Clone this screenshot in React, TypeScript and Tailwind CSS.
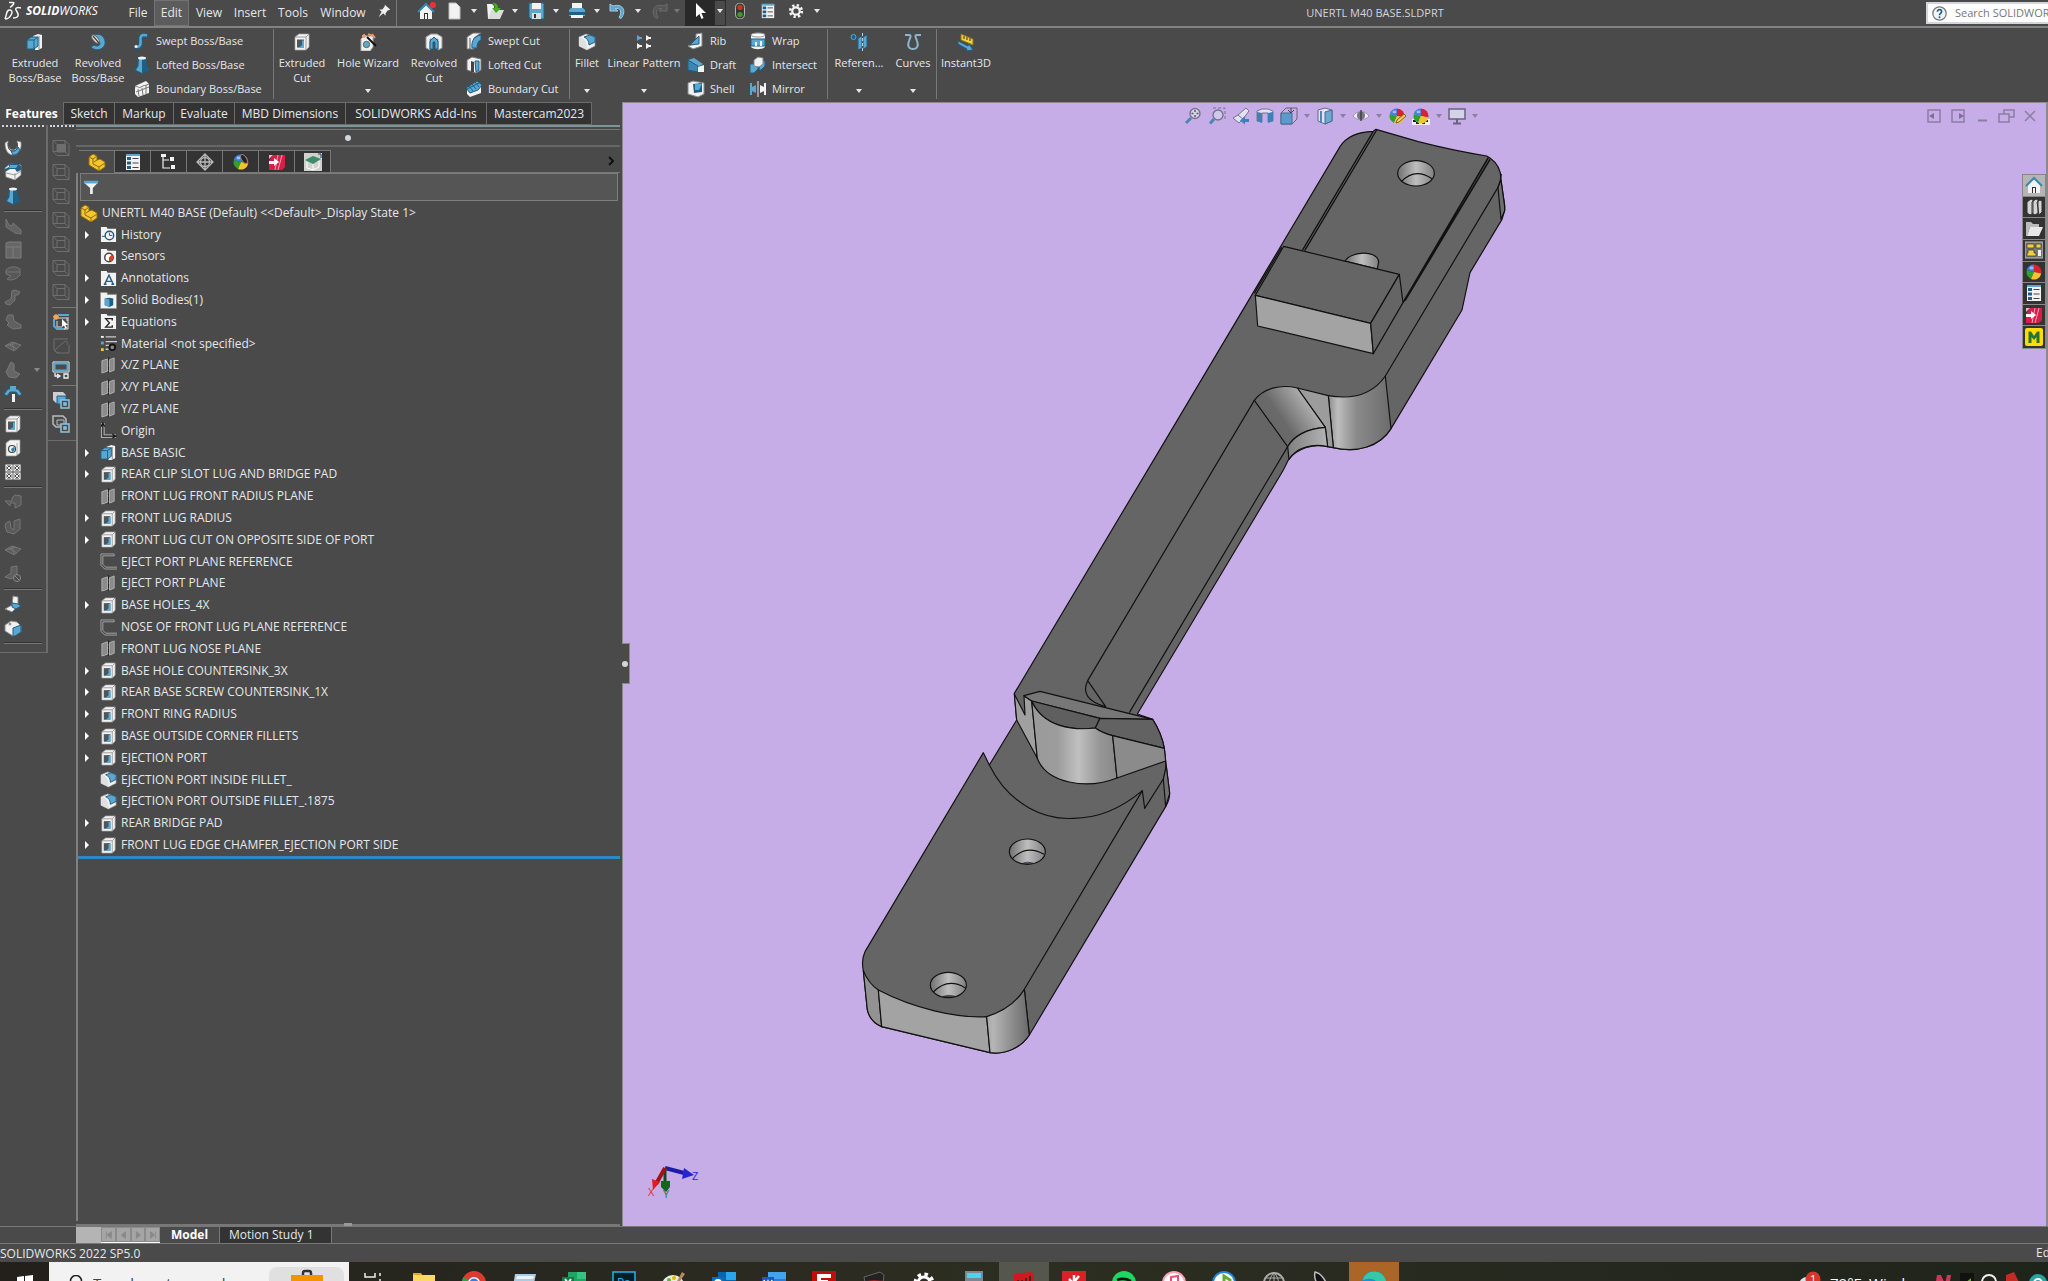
import React from 'react';

type GlyphMap = Record<string, React.ReactNode>;

const W = '#f2f2f2';
const B = '#5ba7cf';
const D = '#1f5f86';
const G = '#6e6e6e';

const ball = (
  <>
    <path d="M9 9V1.5A7.5 7.5 0 0 0 1.8 7Z" fill="#3f7ee0" />
    <path d="M9 9 1.8 7A7.5 7.5 0 0 0 6 15.9Z" fill="#2ea12e" />
    <path d="M9 9V1.5A7.5 7.5 0 0 1 16.3 10.5Z" fill="#d8232a" />
    <path d="M9 9 6 15.9A7.5 7.5 0 0 0 16.3 10.5Z" fill="#f4c430" />
    <ellipse cx="6.5" cy="5" rx="2" ry="1.4" fill="#fff" opacity=".5" />
  </>
);

const cube = (
  <>
    <path d="M1 1.5h12l4 4v11H5l-4-4Z" fill="none" stroke={G} />
    <path d="M5 5.500h8v7H5ZM1 1.500l4 4M1 12.500h4M13 1.500v4M13 12.500l4 4" fill="none" stroke={G} />
  </>
);

const folder = <path d="M1 1h6l1 2h9v14H1Z" fill={W} />;

const glyphs: GlyphMap = {
  extrude: (
    <>
      <path d="M7 3 12 1l4 1v13l-4 2H9Z" fill={W} />
      <path d="M13 3v13" stroke="#888" />
      <path d="M1 7l4-3h7v9l-4 3H1Z" fill={B} stroke={D} />
      <path d="M1 7h7v9M8 7l4-3" fill="none" stroke={D} />
    </>
  ),
  revolve: (
    <>
      <path d="M5 2C12-1 17 5 16 11 14 18 5 18 2 14l3-2c3 2 6 1 6-2Z" fill={B} stroke={D} />
      <ellipse cx="6.500" cy="6" rx="2.500" ry="5" transform="rotate(-40 6.500 6)" fill="#e4e4e4" stroke="#6b6b6b" />
      <path d="M4 3l6 7" stroke="#444" strokeWidth="1.300" />
    </>
  ),
  sweep: (
    <>
      <path d="M3 15c4 1 5-2 4.500-6S8 1.500 15 4" fill="none" stroke={D} strokeWidth="4.500" />
      <path d="M3 14.500c4 1 5-2 4.500-6S8 2 14 3.500" fill="none" stroke={B} strokeWidth="2.500" />
      <circle cx="3" cy="14.500" r="1.500" fill={W} />
    </>
  ),
  loft: (
    <>
      <path d="M5 2h8l1 8 3 4-8 4-8-4 3-4Z" fill={D} />
      <path d="M6 3h3v14l-6-3 2.500-4Z" fill={B} />
      <ellipse cx="9" cy="2" rx="4" ry="1.500" fill={W} />
    </>
  ),
  boundary: (
    <>
      <path d="M2 6 13 1l3 3v9L5 17l-3-3Z" fill={W} />
      <path d="M2 7c3-2 3 2 6 0s4-1 8-3M5 9l1 7M9 8l1 7M13 5v9M3 12l13-5" fill="none" stroke="#777" />
    </>
  ),
  cut: (
    <>
      <path d="M2 4l4-3h10v13l-3 3H2Z" fill={W} stroke="#aaa" strokeWidth=".7" />
      <path d="M13 4v13M2 4h11l3-3" fill="none" stroke="#888" strokeWidth=".8" />
      <path d="M4 6.500h7v8H4Z" fill="#555" />
      <path d="M5.500 7.500H11v7H5.500l3-2v-5Z" fill={B} />
      <path d="M5 14l3.500-2V7" fill="none" stroke={D} />
    </>
  ),
  wizard: (
    <>
      <path d="M2 6l3-3h9v11l-3 4H2Z" fill={W} stroke="#aaa" />
      <circle cx="7.500" cy="11.500" r="3.200" fill={B} stroke="#666" />
      <path d="M8 4l9 9" stroke="#111" strokeWidth="2" />
      <path d="M3 3h4M5 1v4M9 1l5 2M13 1l3 4" stroke="#eb9b62" strokeWidth="1.800" />
    </>
  ),
  revcut: (
    <>
      <path d="M1 4l5-3h6l5 3v11l-4 2V6H5v11l-4-2Z" fill={W} stroke="#999" />
      <path d="M5 8l4-4 4 4v8h-3V9H8v7H5Z" fill={B} stroke={D} />
    </>
  ),
  sweepcut: (
    <>
      <path d="M2 5 8 1h8L9 6v11H2Z" fill={W} stroke="#777" />
      <path d="M7 16C6 8 10 4 16 3v5c-3 1-4 4-4 8Z" fill={B} stroke={D} />
      <path d="M5 6v11" stroke="#555" />
    </>
  ),
  loftcut: (
    <>
      <path d="M2 4l5-3 9 2v11l-5 3-9-3Z" fill={W} stroke="#777" />
      <path d="M6 5l3 1v10H6Z" fill="#444" />
      <path d="M10 5h4v9l-3 2Z" fill={B} stroke={D} />
    </>
  ),
  boundcut: (
    <>
      <path d="M2 8 13 2l3 3v8L5 17l-3-3Z" fill={W} />
      <path d="M1 8 12 1l5 4-4 5-8 3Z" fill={B} stroke={D} />
      <path d="M4 6l4 5M7 4l4 5M10 2l4 5M2 9l12-6" stroke={D} />
    </>
  ),
  fillet: (
    <>
      <path d="M1 4 8 1l9 3v9l-8 4-8-4Z" fill={W} stroke="#999" strokeWidth=".7" />
      <path d="M1 4c6 1 8 5 8 13l-8-4Z" fill="#e0e0e0" />
      <path d="M6 4l6-2 5 2v5l-6 3C11 8 9 5 6 4Z" fill={B} stroke={D} />
    </>
  ),
  pattern: (
    <>
      <path d="M2 2v6l3-2h2V4H5Z" fill={B} />
      <path d="M11 2v6l3-2h2V4h-2ZM2 10v6l3-2h2v-2H5ZM11 10v6l3-2h2v-2h-2Z" fill={W} />
    </>
  ),
  rib: (
    <>
      <path d="M9 2l6-1v13l-9 3-5-3 8-3Z" fill={W} stroke="#888" />
      <path d="M3 13 12 4v8Z" fill={B} stroke={D} />
    </>
  ),
  draft: (
    <>
      <path d="M1 4l6-2 9 6-5 3Z" fill={B} />
      <path d="M1 4l10 6v6l-10-2Z" fill="#3b87b3" stroke={D} />
      <path d="M11 11l6-2v7h-6Z" fill={W} />
    </>
  ),
  shell: (
    <>
      <path d="M1 3 6 1l11 2v11l-6 3-10-3Z" fill={W} stroke="#888" />
      <path d="M6 4l9-1v9l-8 1Z" fill={D} />
      <path d="M8 4h7l-3 6H8Z" fill={B} />
    </>
  ),
  wrap: (
    <>
      <path d="M2 3v12c3 3 11 3 14 0V3Z" fill={W} />
      <ellipse cx="9" cy="3" rx="7" ry="2" fill="#fff" stroke="#999" />
      <path d="M2 7h14v7H2Z" fill={B} stroke={D} />
      <path d="M6 10h2v4H6ZM11 9h2v5h-2Z" fill={W} />
    </>
  ),
  intersect: (
    <>
      <path d="M1 8h8v5l-4 4H1Z" fill={B} stroke={D} />
      <path d="M11 5h5v5l-4 4h-2Z" fill={B} stroke={D} />
      <path d="M5 4l4-3 5 1v6l-4 3-5-1Z" fill={W} stroke="#888" />
    </>
  ),
  mirror: (
    <>
      <path d="M1 3h2v4l4-2v8l-4-2v4H1Z" fill={B} />
      <path d="M17 3h-2v4l-4-2v8l4-2v4h2Z" fill={W} />
      <path d="M9 1v16" stroke="#999" strokeWidth="2" />
    </>
  ),
  reference: (
    <>
      <circle cx="3.500" cy="4" r="2.500" fill={D} stroke={B} />
      <path d="M8 5l4-2v12l-4 2ZM13 4l4-2v12l-4 2Z" fill={B} stroke={D} />
      <path d="M12.500 0v18" stroke="#ccc" strokeDasharray="3 2" />
    </>
  ),
  curves: <path d="M1 2h4c3 0 1 3 0 6-2 5 0 8 4 8s6-3 4-8c-1-3-3-6 0-6h4" fill="none" stroke="#8cb4cc" strokeWidth="2" />,
  instant: (
    <>
      <path d="M4 1l12 5v6L4 7Z" fill="#f3cf3c" stroke="#8a7320" />
      <path d="M7 3v3M10 4v3M13 5v3" stroke="#333" />
      <path d="M1 8l10 5 1-2 4 6-7 1 1-2-9-5Z" fill={B} stroke={D} />
    </>
  ),
  home: (
    <>
      <path d="M3 9 9 3l6 6v8H3Z" fill={W} />
      <path d="M1 10 9 2l8 8" fill="none" stroke="#3b87b3" strokeWidth="2" />
      <path d="M7 11h4v6H7Z" fill="#333" />
      <path d="M8 12h2v5H8Z" fill={W} />
    </>
  ),
  page: <path d="M4 1h7l4 4v12H4Z" fill={W} stroke="#bbb" />,
  open: (
    <>
      <path d="M1 2h5l2 2v12l-6 1Z" fill={W} />
      <path d="M5 8h13l-4 9H2Z" fill="#dcdcdc" />
      <path d="M6 1c5 0 6 2 6 5h3l-5 5-4-5h3c0-2-1-4-3-5Z" fill="#3fae1f" />
    </>
  ),
  save: (
    <>
      <path d="M2 1h15v16H4l-2-2Z" fill={B} stroke={D} />
      <path d="M5 1h9v6H5Z" fill={W} />
      <path d="M5 11h9v6H5Z" fill="#ddd" />
      <path d="M7 12h2v4H7Z" fill="#333" />
    </>
  ),
  print: (
    <>
      <path d="M4 1h10v6H4Z" fill={W} />
      <path d="M1 8l2-2h12l2 2v6H1Z" fill={B} />
      <path d="M1 10h16v3H1Z" fill={D} />
      <path d="M3 13h12v3H3Z" fill={W} />
    </>
  ),
  undo: <path d="M1 2v7h8L6 6.500c6-1 7 4 4 9l2 1C18 9 14 1 4 4Z" fill={B} stroke="#9fcbe2" />,
  redo: <path d="M17 2v7H9l3-2.500c-6-1-7 4-4 9l-2 1C0 9 4 1 14 4Z" fill="#555" stroke="#6c6c6c" />,
  cursor: <path d="M5 1v14l3.500-3 2 5 2-1-2-5H15Z" fill="#fff" />,
  traffic: (
    <>
      <rect x="4" y="0" width="10" height="18" rx="5" fill="#333" stroke="#ccc" />
      <circle cx="9" cy="5" r="3" fill="#d83020" />
      <circle cx="9" cy="13" r="3" fill="#3d9a28" />
    </>
  ),
  list: (
    <>
      <path d="M2 1h14v16H2Z" fill={W} />
      <path d="M3 4h4v3H3ZM3 8.500h4v3H3ZM3 13h4v3H3Z" fill={D} />
      <path d="M8.500 5.500h6M8.500 10h6M8.500 14.500h6" stroke="#444" />
      <path d="M2 1h14v2H2Z" fill={B} />
    </>
  ),
  gear: (
    <>
      <circle cx="9" cy="9" r="6.500" fill="none" stroke={W} strokeWidth="3" strokeDasharray="2.600 2.500" />
      <circle cx="9" cy="9" r="4.200" fill="none" stroke={W} strokeWidth="2.500" />
    </>
  ),
  pin: <path d="M10 1l7 6-2 1-1 0-3 4 0 3-3-3-6 5 4-7-3-3h4l3-4Z" fill={W} />,
  part: (
    <>
      <path d="M1 4l4-3 4 2v4l3-1 5 3v5l-6 4-10-6Z" fill="#f5c62f" stroke="#8d6a10" />
      <path d="M1 4l4 2v5l6 3 6-4M11 14v4M5 6l4-3M9 7l-3 2" fill="none" stroke="#8d6a10" />
    </>
  ),
  tree: (
    <>
      <path d="M3 1v14h7M3 7h6" fill="none" stroke={W} strokeWidth="1.200" />
      <path d="M1 1h5v3H1ZM10 4h4v4h-4ZM11 12h4v4h-4Z" fill={W} />
    </>
  ),
  target: (
    <>
      <path d="M9 1l8 8-8 8-8-8ZM9 1v16M1 9h16" fill="none" stroke="#b9b9b9" strokeWidth="1.300" />
      <circle cx="9" cy="9" r="4.500" fill="none" stroke="#b9b9b9" strokeWidth="1.300" />
    </>
  ),
  ball,
  tabball: (
    <>
      {ball}
      <ellipse cx="12" cy="6" rx="2.500" ry="5" transform="rotate(-30 12 6)" fill="#222" stroke="#888" />
    </>
  ),
  cam: (
    <>
      <path d="M5 2h12v12l-3 3H1V8Z" fill="#d81e48" />
      <path d="M10 2 7 17M14 2l-4 15" stroke="#f7c6d1" strokeWidth=".8" />
      <path d="M1 8h5V5l5 4-5 4v-2H1Z" fill="#fff" />
      <path d="M1 2h4L1 6Z" fill="#f3b4c2" />
    </>
  ),
  sheet: (
    <>
      <path d="M0 0h18v18H0Z" fill="#cfd2cf" />
      <path d="M1 7l8-4 8 3-8 5Z" fill="#3f8a6c" />
      <path d="M3 9v6l6 2V11M9 17l6-3V8" fill="none" stroke="#fff" />
      <path d="M14 1h3v4" fill="none" stroke="#246" />
    </>
  ),
  history: (
    <>
      {folder}
      <circle cx="10" cy="10" r="4.500" fill="none" stroke={D} strokeWidth="1.500" />
      <path d="M10 7v3h3M2 11h4" fill="none" stroke={D} />
    </>
  ),
  sensors: (
    <>
      {folder}
      <circle cx="9.500" cy="10" r="4.500" fill="#fff" stroke="#444" strokeWidth="1.500" />
      <path d="M9.500 14V10l3-3a4 4 0 0 1-3 7Z" fill="#e04020" />
    </>
  ),
  annotations: (
    <>
      {folder}
      <path d="M5 15 9.500 5.500 14 15M7 12h5M4 15h3M12 15h3" fill="none" stroke={D} strokeWidth="1.500" />
    </>
  ),
  bodies: (
    <>
      {folder}
      <path d="M.5.500h7l1 2h9v15H.5Z" fill="none" stroke="#999" />
      <path d="M5 7l5-1 4 1v7l-4 2-5-2Z" fill={D} />
      <path d="M5 7l5 1v8l-5-2Z" fill={B} />
    </>
  ),
  equations: (
    <>
      {folder}
      <path d="M13 8V6H6l4 4.500L6 15h7v-2" fill="none" stroke="#222" strokeWidth="1.400" />
    </>
  ),
  material: (
    <>
      <path d="M1 1h3v2H1Z" fill={W} />
      <path d="M1 7h3v3H1Z" fill={B} />
      <path d="M1 14h3v3H1Z" fill="#f4c430" />
      <path d="M6 2h11M6 7h12M6 11h5M6 15h3" stroke="#ccc" strokeWidth="1.500" />
      <circle cx="13" cy="13" r="3" fill="#888" stroke="#151515" strokeWidth="2" />
    </>
  ),
  plane: (
    <>
      <path d="M2 4l6-2v13l-6 2ZM10 3l5-2v13l-5 2Z" fill="#8b8b8b" stroke="#b0b0b0" />
      <path d="M9 0v18" stroke="#222" strokeDasharray="5 1 2 1" />
    </>
  ),
  origin: (
    <>
      <path d="M3 1v14h14" fill="none" stroke="#a8a8a8" strokeWidth="4" />
      <path d="M3 2v13h13M1 5l2-4 2 4M13 13l4 2-4 2" fill="none" stroke="#161616" strokeWidth="1.200" />
    </>
  ),
  sketch: <path d="M15 1H1v12l4 4h13M15 3H3v9l3 3h12M15 1v2" fill="none" stroke="#a6a6a6" />,
  funnel: (
    <>
      <path d="M1 4h16l-6 6v7H8v-7Z" fill={W} />
      <path d="M1 2h16v3H1Z" fill={B} />
    </>
  ),
  curveband: (
    <>
      <path d="M1 4l3-2c0 5 1 9 5 9s5-4 4-9l4 1c1 8-3 13-8 13S1 11 1 4Z" fill={W} stroke="#888" strokeWidth=".7" />
      <path d="M4 4c0 5 1 8 5 8s5-3 4-8" fill="none" stroke="#333" />
      <path d="M7 12c4 1 6-1 7-4l2 3c-1 3-4 5-7 5Z" fill={B} stroke={D} />
    </>
  ),
  indent: (
    <>
      <path d="M1 5l5-4 11 1v10l-6 5-9-3Z" fill={W} stroke="#888" strokeWidth=".7" />
      <path d="M5 1h9l3 2v4l-4 2-2-3H6L1 9V6l4-2Z" fill={D} />
      <path d="M6 2h8l-2 3H5Z" fill={B} />
      <path d="M11 10v7M2 10l9 2 6-4" stroke="#999" fill="none" />
    </>
  ),
  arch: (
    <>
      <path d="M0 9l4-5h10l4 5-3 2-3-4H6l-3 4Z" fill={B} stroke={D} />
      <path d="M8 9h3v8H8Z" fill={W} />
      <path d="M6 1h6v4H6Z" fill={B} />
    </>
  ),
  hole: (
    <>
      <path d="M2 4l4-3h10v13l-4 3H2Z" fill={W} stroke="#999" strokeWidth=".7" />
      <circle cx="8" cy="10" r="3.500" fill={W} stroke="#444" strokeWidth="1.200" />
      <path d="M8 13a3 3 0 0 0 2-5L7 10Z" fill="#2f80b4" />
      <path d="M13 4v12" stroke="#aaa" />
    </>
  ),
  grid4: (
    <>
      <path d="M2 2h6v6H2ZM10 2h6v6h-6ZM2 10h6v6H2ZM10 10h6v6h-6Z" fill="none" stroke={W} strokeWidth="1.200" />
      <path d="M2 2l6 6M8 2 2 8M10 2l6 6M16 2l-6 6M2 10l6 6M8 10l-6 6M10 10l6 6M16 10l-6 6" stroke={W} />
    </>
  ),
  elbow: (
    <>
      <path d="M9 1l5 1v9l-6 6-7-3 7-4Z" fill={W} stroke="#888" />
      <path d="M8 8l6 1 3 2-5 3-4-2Z" fill={B} stroke={D} />
    </>
  ),
  block: (
    <>
      <path d="M1 6l6-4 6 1 4 4v6l-8 4-8-5Z" fill={W} stroke="#888" />
      <path d="M9 9l8-3v7l-6 4H9Z" fill={B} stroke={D} />
      <circle cx="6" cy="5" r="1.500" fill="#999" />
    </>
  ),
  ghostA: <path d="M2 2l3 6 3 1 1-3 8 7v4l-6-1-9-6Z" fill="#636363" stroke="#757575" />,
  ghostB: <path d="M2 2l3-1h12v16H2ZM2 6h15M9 6v11" fill="#666" stroke="#7c7c7c" />,
  ghostC: <path d="M2 5c4-4 10-4 14-1v6c-4 5-10 6-13 4l4-3-5-2ZM2 7h14" fill="#585858" stroke="#757575" />,
  ghostD: <path d="M8 2l3-1 5 2-2 3h-3v5l-5 5-4-1-1-2 6-3Z" fill="#606060" stroke="#777" />,
  ghostE: <path d="M4 2h5l1 6 7 4v3l-8 1-6-4 2-2-3-3Z" fill="#606060" stroke="#777" />,
  ghostF: <path d="M1 9l7-4 9 3-7 6ZM4 7l9 5M8 5l2 9M1 9l11-3" fill="#5c5c5c" stroke="#757575" />,
  ghostG: <path d="M7 1l3 2v7l6 3-4 4-7-1-3-5Z" fill="#666" stroke="#7a7a7a" />,
  ghostJ: <path d="M1 8l5 5v-3h5v5l6-3V3l-6-1-3 3v3H4Z" fill="#585858" stroke="#757575" />,
  ghostH: <path d="M2 6l4-2 1 7 3 2V4l6-2v10l-6 5-7-2-2-6Z" fill="#5a5a5a" stroke="#757575" />,
  ghostI: (
    <>
      <path d="M7 2l6-1v8l-6 5-6-2 6-4Z" fill="#5e5e5e" stroke="#777" />
      <circle cx="13" cy="13" r="3.500" fill="#4a4a4a" stroke="#888" />
      <path d="M11 11l4 4" stroke="#888" />
    </>
  ),
  cube,
  cubeFace: (
    <>
      {cube}
      <path d="M5 5.500h9v8H5Z" fill={G} />
    </>
  ),
  selectSketch: (
    <>
      <path d="M6 2h11M2 6v7l3 3h8" fill="none" stroke={B} strokeWidth="2" />
      <path d="M6 5h9v3M5 8v6h5M16 4v12h-4" fill="none" stroke="#ddd" />
      <path d="M4 1v6M1 4h6M2 2l4 4M6 2 2 6" stroke="#f2a65a" strokeWidth="1.300" />
      <path d="M10 6v8l2-1.500 1.500 3.500 1.500-1-1.500-3H16Z" fill="#fff" />
    </>
  ),
  noSketch: <path d="M16 2H2v11l3 3h12V8M4 12l8-7M12 5a2 2 0 1 1 3 3M4 12a2 2 0 1 0 3 3" fill="none" stroke={G} />,
  screenTo: (
    <>
      <path d="M1 1h16v10H1Z" fill="none" stroke={W} />
      <path d="M2.500 2.500h13v7h-13Z" fill="#4a4a4a" stroke={B} strokeWidth="2" />
      <path d="M3 12v3h4M5 13l3 2-3 2M12 13h4v4h-4Z" fill="none" stroke={W} strokeWidth="1.300" />
    </>
  ),
  linkA: (
    <>
      <path d="M1 1h10l3 3v8H4L1 9Z" fill="#cfcfcf" />
      <path d="M5 5h9v8H5Z" fill={B} stroke={D} />
      <path d="M9 9h8v8H9ZM12 12h2v2h-2Z" fill="#4a4a4a" stroke="#8cc4e2" strokeWidth="1.500" />
    </>
  ),
  linkB: (
    <>
      <path d="M1 1h10l3 3v8H4L1 9Z" fill="none" stroke="#bbb" strokeWidth="1.500" />
      <path d="M5 5h7v5H5Z" fill="none" stroke="#bbb" />
      <path d="M9 9h8v8H9ZM12 12h2v2h-2Z" fill="#4a4a4a" stroke="#8cc4e2" strokeWidth="1.500" />
    </>
  ),
  zoomFit: (
    <>
      <circle cx="11" cy="6.500" r="5" fill="#d6d3ea" stroke="#77748c" strokeWidth="1.400" />
      <path d="M11 3v7M7.500 6.500h7" stroke="#55536a" strokeWidth="1.400" strokeDasharray="2 3" />
      <path d="M7 11l-5 5" stroke="#4f85b4" strokeWidth="3" />
    </>
  ),
  zoomArea: (
    <>
      <path d="M5 1h12v12" fill="none" stroke="#77748c" strokeDasharray="3 2" />
      <circle cx="10" cy="8" r="5" fill="#cfc8ea" stroke="#77748c" strokeWidth="1.400" />
      <path d="M6 12l-4 4.500" stroke="#4f85b4" strokeWidth="3" />
    </>
  ),
  prevView: (
    <>
      <path d="M1 11 6 8 14 1l3 3-6 8-4 4Z" fill="#e4e2f2" stroke="#77748c" />
      <path d="M6 8l5 4" stroke="#77748c" />
      <path d="M17 12h-4V9l-5 4.500 5 4V15h4Z" fill="#3f80b8" />
    </>
  ),
  section: (
    <>
      <path d="M1 4l5-2h6l5 2v10l-5 1V6H6v9l-5-1Z" fill="#e3e1f0" stroke="#77748c" />
      <path d="M1 5l5 1v10l-5-2ZM12 6l5-1v9l-5 2Z" fill="#3f80b8" />
    </>
  ),
  viewCube: (
    <>
      <path d="M1 6 6 1h11v11l-5 5H1Z" fill="none" stroke="#67647c" />
      <path d="M1 6h11v11H1Z" fill="#5d9acb" stroke="#3e6f99" />
      <path d="M11 1v5M8 3l3 3 3-3" fill="none" stroke="#444" />
    </>
  ),
  shaded: (
    <>
      <path d="M2 3l7-2 7 2v11l-7 3-7-3Z" fill="#e5e3f2" stroke="#67647c" />
      <path d="M9 5l7-2v11l-7 3Z" fill="#6da7d2" stroke="#3e6f99" />
      <path d="M5 4v12" stroke="#4b87b5" strokeWidth="2" />
    </>
  ),
  eye: (
    <>
      <path d="M1 9c4-6 12-6 16 0-4 5-12 5-16 0Z" fill="#eeecf6" stroke="#9a96ae" />
      <circle cx="9" cy="8.500" r="4" fill="#77748c" />
      <path d="M9 3v11" stroke="#333" strokeWidth="1.200" />
    </>
  ),
  paint: (
    <>
      {ball}
      <path d="M8 16l1-3 7-6 2 2-7 6Z" fill="#f2cf68" stroke="#7c6420" />
    </>
  ),
  scene: (
    <>
      <path d="M0 12h18v6H0Z" fill="#eee" />
      <path d="M1 13h3v2H1ZM7 13h3v2H7ZM13 13h3v2h-3ZM4 15h3v2H4ZM10 15h3v2h-3Z" fill="#222" />
      {ball}
    </>
  ),
  monitor: (
    <>
      <path d="M1 2h16v10H1Z" fill="#d5d2ea" stroke="#67647c" strokeWidth="1.500" />
      <path d="M9 12v4M5 16.500h8" stroke="#67647c" strokeWidth="2" />
    </>
  ),
  paneL: (
    <>
      <path d="M3 3h12v12H3Z" fill="none" stroke="#8b7ea3" strokeWidth="1.500" />
      <path d="M9 6v6L4 9Z" fill="#7d7094" />
    </>
  ),
  paneR: (
    <>
      <path d="M3 3h12v12H3Z" fill="none" stroke="#8b7ea3" strokeWidth="1.500" />
      <path d="M10 6v6l5-3Z" fill="#7d7094" />
    </>
  ),
  min: <path d="M5 13.500h9" stroke="#8b7ea3" strokeWidth="2" />,
  restore: <path d="M7 7V3h10v7h-5M2 7h10v8H2Z" fill="none" stroke="#8b7ea3" strokeWidth="1.500" />,
  close: <path d="M4 4l10 10M14 4 4 14" stroke="#8b7ea3" strokeWidth="1.500" />,
  library: <path d="M2 4l4-3 2 1v13l-3 2-3-2ZM7 4l4-3 2 1v13l-3 2-3-2ZM12 4l3-2 2 1v11l-3 3Z" fill="#d5d5d5" stroke="#333" />,
  folderOpen: (
    <>
      <path d="M1 2h5l2 2h6v3H5L2 16H1Z" fill="#bbb" />
      <path d="M5 7h13l-4 9H2Z" fill="#e8e8e8" />
    </>
  ),
  palette: (
    <>
      <path d="M0 1h18v16H0Z" fill="#777" stroke="#bbb" />
      <path d="M2 3h7v4H2ZM11 3h5v4h-5ZM3 9h6v3h2v3H2v-3h1Z" fill="#f4cf3c" stroke="#333" strokeWidth=".7" />
      <path d="M13 9h3v6h-3Z" fill={W} />
    </>
  ),
  mcam: (
    <>
      <rect width="18" height="18" rx="2" fill="#ffdc00" />
      <path d="M3.500 15V3.500H6L9 8l3-4.500h2.500V15h-3V9L9 12 6.500 9v6Z" fill="#23733a" />
    </>
  ),
  help: (
    <>
      <circle cx="9" cy="9" r="8" fill="#f4f4f4" stroke="#777" strokeWidth="1.500" />
      <path d="M6.500 7c0-4 5.500-3.500 5 0-.3 2-2.500 1.800-2.500 4" fill="none" stroke={D} strokeWidth="2" />
      <circle cx="9" cy="13.500" r="1.200" fill={D} />
    </>
  ),
};

const Glyph = ({ name, size = 'size-[18px]' }: { name: string; size?: string }) => (
  <svg viewBox="0 0 18 18" className={`${size} shrink-0`} aria-hidden="true">
    {glyphs[name]}
  </svg>
);

const Caret = ({ className = 'text-gray-200' }: { className?: string }) => (
  <svg viewBox="0 0 6 4" className={`h-1 w-1.5 shrink-0 ${className}`} aria-hidden="true">
    <path d="M0 0h6L3 4Z" fill="currentColor" />
  </svg>
);

const menuItems = [
  { label: 'File', className: 'w-8' },
  { label: 'Edit', className: 'w-[35px] h-full bg-[#5c5c5c] border border-[#737373]' },
  { label: 'View', className: 'w-10' },
  { label: 'Insert', className: 'w-[42px]' },
  { label: 'Tools', className: 'w-11' },
  { label: 'Window', className: 'w-14' },
];

const MenuBar = () => (
  <header className="flex h-7 shrink-0 items-center border-b-2 border-[#828282]">
    <div className="flex h-full w-[122px] items-center gap-1 pb-1 pl-1">
      <svg viewBox="0 0 18 20" className="h-5 w-[18px]" aria-hidden="true">
        <path
          d="M5 1.500h4c2 0 0 3-3 5M1 18c2-5 1-8 4-9 3-.5 4 2 2 5-1 2-3 4-6 4M17 7c-4-1-6 0-5 2s3 4 2 6-3 2-5 2"
          fill="none"
          stroke="#f4f4f4"
          strokeWidth="1.500"
        />
      </svg>
      <span className="text-xs text-white italic">
        <b>SOLID</b>WORKS
      </span>
    </div>
    <nav className="flex h-full items-center" aria-label="Main menu">
      {menuItems.map((item) => (
        <button key={item.label} className={`shrink-0 text-center ${item.className}`}>
          {item.label}
        </button>
      ))}
    </nav>
    <button className="flex w-[25px] justify-center pb-1" aria-label="Pin menu">
      <Glyph name="pin" size="size-3.5" />
    </button>
    <div className="h-full w-px bg-[#7a7a7a]" />
    <div className="flex h-full items-center pb-1">
      <button className="relative mr-[7px] ml-[18px] flex w-[21px] justify-center" aria-label="Home">
        <Glyph name="home" />
        <span className="absolute top-0 right-0 size-1.5 rounded-full bg-red-500" />
      </button>
      {['page', 'open', 'save', 'print', 'undo'].map((name) => (
        <div key={name} className="flex items-center">
          <button className="flex w-[21px] justify-center" aria-label={name}>
            <Glyph name={name} />
          </button>
          <button className="flex w-5 justify-center" aria-label={`${name} options`}>
            <Caret />
          </button>
        </div>
      ))}
      <button className="flex w-[21px] justify-center" aria-label="redo">
        <Glyph name="redo" />
      </button>
      <button className="flex w-4 justify-center" aria-label="redo options">
        <Caret className="text-[#777]" />
      </button>
    </div>
    <button className="flex h-full w-[29px] items-center justify-center bg-[#292929] pb-1" aria-label="Select">
      <Glyph name="cursor" />
    </button>
    <button className="flex h-full w-3 items-center justify-center border border-[#2c2c2c] pb-1" aria-label="Select options">
      <Caret />
    </button>
    <div className="flex h-full items-center pb-1">
      {['traffic', 'list', 'gear'].map((name) => (
        <button key={name} className="flex w-7 justify-center" aria-label={name}>
          <Glyph name={name} size="size-4" />
        </button>
      ))}
      <button className="flex w-3.5 justify-center" aria-label="Options">
        <Caret />
      </button>
    </div>
    <h1 className="flex-1 text-center text-[11px] text-gray-300">UNERTL M40 BASE.SLDPRT</h1>
    <label className="flex h-[22px] w-[122px] items-center gap-2 overflow-hidden border-2 border-r-0 border-gray-300 bg-white pl-1">
      <Glyph name="help" size="size-[15px]" />
      <input
        aria-label="Search SOLIDWORKS"
        placeholder="Search SOLIDWORKS"
        className="w-40 shrink-0 bg-transparent text-[11px] placeholder:text-[#777]"
      />
    </label>
  </header>
);

type BigProps = { icon: string; label: string; width: string; menu?: boolean };

const BigTool = ({ icon, label, width, menu }: BigProps) => (
  <button className={`flex h-full shrink-0 flex-col items-center pt-1 ${width}`}>
    <Glyph name={icon} />
    <span className="mt-1 min-h-[30px] text-center leading-[15px] whitespace-pre">{label}</span>
    {menu && <Caret className="mt-1 text-gray-200" />}
  </button>
);

const SmallTools = ({ items, width }: { items: [string, string][]; width: string }) => (
  <div className={`flex h-full shrink-0 flex-col pl-[3px] ${width}`}>
    {items.map(([icon, label]) => (
      <button key={label} className="flex h-6 shrink-0 items-center gap-[5px] whitespace-nowrap">
        <Glyph name={icon} />
        {label}
      </button>
    ))}
  </div>
);

const Divider = () => <div className="h-[70px] w-px shrink-0 bg-[#777]" />;

const Ribbon = () => (
  <section className="flex h-[74px] shrink-0 pt-px text-[11px]" aria-label="Features ribbon">
    <div className="flex pl-1">
      <BigTool icon="extrude" label={'Extruded\nBoss/Base'} width="w-[62px]" />
      <BigTool icon="revolve" label={'Revolved\nBoss/Base'} width="w-16" />
      <SmallTools
        width="w-[143px]"
        items={[['sweep', 'Swept Boss/Base'], ['loft', 'Lofted Boss/Base'], ['boundary', 'Boundary Boss/Base']]}
      />
    </div>
    <Divider />
    <BigTool icon="cut" label={'Extruded\nCut'} width="w-14" />
    <BigTool icon="wizard" label="Hole Wizard" width="w-[76px]" menu />
    <BigTool icon="revcut" label={'Revolved\nCut'} width="w-14" />
    <SmallTools width="w-[107px]" items={[['sweepcut', 'Swept Cut'], ['loftcut', 'Lofted Cut'], ['boundcut', 'Boundary Cut']]} />
    <Divider />
    <BigTool icon="fillet" label="Fillet" width="w-[34px]" menu />
    <BigTool icon="pattern" label="Linear Pattern" width="w-20" menu />
    <SmallTools width="w-[62px]" items={[['rib', 'Rib'], ['draft', 'Draft'], ['shell', 'Shell']]} />
    <SmallTools width="w-[81px]" items={[['wrap', 'Wrap'], ['intersect', 'Intersect'], ['mirror', 'Mirror']]} />
    <Divider />
    <BigTool icon="reference" label="Referen..." width="w-[62px]" menu />
    <BigTool icon="curves" label="Curves" width="w-[46px]" menu />
    <Divider />
    <BigTool icon="instant" label="Instant3D" width="w-[58px]" />
  </section>
);

const tabs = [
  { label: 'Sketch', width: 'w-[51px]' },
  { label: 'Markup', width: 'w-[59px]' },
  { label: 'Evaluate', width: 'w-[61px]' },
  { label: 'MBD Dimensions', width: 'w-[111px]' },
  { label: 'SOLIDWORKS Add-Ins', width: 'w-[141px]' },
  { label: 'Mastercam2023', width: 'w-[105px]' },
];

const CommandTabs = () => (
  <div className="flex h-[23px] shrink-0" role="tablist">
    <button role="tab" aria-selected="true" className="w-16 border-r border-[#6c6c6c] font-bold text-white">
      Features
    </button>
    {tabs.map((tab) => (
      <button
        key={tab.label}
        role="tab"
        className={`border-t border-r border-b border-[#6c6c6c] bg-[#333] whitespace-nowrap ${tab.width}`}
      >
        {tab.label}
      </button>
    ))}
  </div>
);

const leftTools = [
  ['curveband', 'indent', 'loft'],
  ['ghostA', 'ghostB', 'ghostC', 'ghostD', 'ghostE', 'ghostF', 'ghostG', 'arch'],
  ['cut', 'hole', 'grid4'],
  ['ghostJ', 'ghostH', 'ghostF', 'ghostI'],
  ['elbow', 'block'],
];

const viewTools = [
  ['cubeFace', 'cube', 'cube', 'cube', 'cube', 'cube', 'cube'],
  ['selectSketch', 'noSketch', 'screenTo'],
  ['linkA', 'linkB'],
];

const Grip = () => <div className="mx-0.5 h-1 shrink-0 border-t-2 border-dotted border-gray-300" />;

const ToolColumns = () => (
  <div className="flex w-[76px] shrink-0 items-start">
    <div className="w-12 border-r-2 border-b border-[#6c6c6c] pb-1.5">
      <Grip />
      <div className="pt-[7px]">
        {leftTools.map((group, g) => (
          <div key={g}>
            {group.map((name, i) => (
              <div key={i} className="flex h-6 items-center pl-1">
                <button aria-label={`${name} tool`}>
                  <Glyph name={name} />
                </button>
                {name === 'ghostG' && <Caret className="ml-3 text-[#8a8a8a]" />}
              </div>
            ))}
            <div className="mx-1 flex h-1.5 items-center">
              <div className="h-0.5 w-full border-t border-[#333] bg-[#777]" />
            </div>
          </div>
        ))}
      </div>
    </div>
    <div className="w-7 border-b border-[#6c6c6c] pb-1">
      <Grip />
      <div className="pt-[7px]">
        {viewTools.map((group, g) => (
          <div key={g}>
            {g > 0 && (
              <div className="ml-1 flex h-1.5 items-center">
                <div className="h-px w-full bg-[#777]" />
              </div>
            )}
            {group.map((name, i) => (
              <div key={i} className="flex h-6 items-center pl-1">
                <button aria-label={`${name} view ${i + 1}`}>
                  <Glyph name={name} />
                </button>
              </div>
            ))}
          </div>
        ))}
      </div>
    </div>
  </div>
);

type Node = { icon: string; label: string; expandable?: boolean };

const nodes: Node[] = [
  { icon: 'history', label: 'History', expandable: true },
  { icon: 'sensors', label: 'Sensors' },
  { icon: 'annotations', label: 'Annotations', expandable: true },
  { icon: 'bodies', label: 'Solid Bodies(1)', expandable: true },
  { icon: 'equations', label: 'Equations', expandable: true },
  { icon: 'material', label: 'Material <not specified>' },
  { icon: 'plane', label: 'X/Z PLANE' },
  { icon: 'plane', label: 'X/Y PLANE' },
  { icon: 'plane', label: 'Y/Z PLANE' },
  { icon: 'origin', label: 'Origin' },
  { icon: 'extrude', label: 'BASE BASIC', expandable: true },
  { icon: 'cut', label: 'REAR CLIP SLOT LUG AND BRIDGE PAD', expandable: true },
  { icon: 'plane', label: 'FRONT LUG FRONT RADIUS PLANE' },
  { icon: 'cut', label: 'FRONT LUG RADIUS', expandable: true },
  { icon: 'cut', label: 'FRONT LUG CUT ON OPPOSITE SIDE OF PORT', expandable: true },
  { icon: 'sketch', label: 'EJECT PORT PLANE REFERENCE' },
  { icon: 'plane', label: 'EJECT PORT PLANE' },
  { icon: 'cut', label: 'BASE HOLES_4X', expandable: true },
  { icon: 'sketch', label: 'NOSE OF FRONT LUG PLANE REFERENCE' },
  { icon: 'plane', label: 'FRONT LUG NOSE PLANE' },
  { icon: 'cut', label: 'BASE HOLE COUNTERSINK_3X', expandable: true },
  { icon: 'cut', label: 'REAR BASE SCREW COUNTERSINK_1X', expandable: true },
  { icon: 'cut', label: 'FRONT RING RADIUS', expandable: true },
  { icon: 'cut', label: 'BASE OUTSIDE CORNER FILLETS', expandable: true },
  { icon: 'cut', label: 'EJECTION PORT', expandable: true },
  { icon: 'fillet', label: 'EJECTION PORT INSIDE FILLET_' },
  { icon: 'fillet', label: 'EJECTION PORT OUTSIDE FILLET_.1875' },
  { icon: 'cut', label: 'REAR BRIDGE PAD', expandable: true },
  { icon: 'cut', label: 'FRONT LUG EDGE CHAMFER_EJECTION PORT SIDE', expandable: true },
];

const FeatureTree = () => (
  <ul className="grid h-[654px] auto-rows-fr">
    <li className="flex items-center gap-1 pl-0.5">
      <Glyph name="part" />
      UNERTL M40 BASE (Default) &lt;&lt;Default&gt;_Display State 1&gt;
    </li>
    {nodes.map((node) => (
      <li key={node.label} className="flex items-center gap-1 whitespace-nowrap">
        <span className="flex w-[18px] justify-center">
          {node.expandable && (
            <svg viewBox="0 0 4 8" className="h-2 w-1" aria-hidden="true">
              <path d="M0 0l4 4-4 4Z" fill="#fff" />
            </svg>
          )}
        </span>
        <Glyph name={node.icon} size="size-[17px]" />
        {node.label}
      </li>
    ))}
  </ul>
);

const FeatureManager = () => (
  <div className="flex min-w-0 flex-1 flex-col pr-0.5">
    <div className="h-[5px] shrink-0 border-t-2 border-b border-t-[#7f9496] border-b-[#777]" />
    <div className="flex h-[17px] shrink-0 items-center justify-center border-b-2 border-[#666]">
      <span className="size-1.5 rounded-full bg-gray-300" />
    </div>
    <div className="flex h-[26px] shrink-0 items-end pt-[3px] pl-[3px]" role="tablist">
      {['part', 'list', 'tree', 'target', 'tabball', 'cam', 'sheet'].map((name, i) => (
        <button
          key={name}
          role="tab"
          aria-label={name}
          className={`flex h-full w-9 items-center justify-center border-t border-r border-[#777] ${
            i === 0 ? '' : 'border-b bg-[#333]'
          }`}
        >
          <Glyph name={name} />
        </button>
      ))}
      <div className="flex h-full flex-1 items-center justify-end border-b border-[#777] pr-1.5">
        <svg viewBox="0 0 6 10" className="h-2.5 w-1.5" aria-hidden="true">
          <path d="M1 1l4 4-4 4" fill="none" stroke="#111" strokeWidth="2" />
        </svg>
      </div>
    </div>
    <div className="flex flex-1 flex-col border-l-2 border-[#808080]">
      <label className="mx-0.5 mb-px flex h-7 shrink-0 items-center border border-[#7d7d7d] bg-[#555] pl-0.5">
        <Glyph name="funnel" size="size-4" />
        <input aria-label="Filter features" className="min-w-0 flex-1 bg-transparent px-2" />
      </label>
      <FeatureTree />
      <div className="h-[3px] bg-[#2f88c4]" />
    </div>
    <div className="flex h-[5px] shrink-0 justify-center border-b-2 border-[#777]">
      <span className="mt-0.5 h-1 w-2 bg-[#999]" />
    </div>
  </div>
);

const Model = () => (
  <svg viewBox="623 103 1423 1123" className="absolute inset-0 size-full" role="img" aria-label="Scope base part">
    <defs>
      <linearGradient id="cyl">
        <stop offset="0" stopColor="#8c8c8c" />
        <stop offset=".15" stopColor="#bdbdbd" />
        <stop offset=".45" stopColor="#8a8a8a" />
        <stop offset="1" stopColor="#6c6c6c" />
      </linearGradient>
      <linearGradient id="lug">
        <stop offset="0" stopColor="#9a9a9a" />
        <stop offset=".3" stopColor="#9c9c9c" />
        <stop offset=".55" stopColor="#c0c0c0" />
        <stop offset=".8" stopColor="#969696" />
        <stop offset="1" stopColor="#888" />
      </linearGradient>
      <linearGradient id="bore">
        <stop offset="0" stopColor="#707070" />
        <stop offset=".5" stopColor="#bebebe" />
        <stop offset="1" stopColor="#808080" />
      </linearGradient>
      <linearGradient id="cove" x1=".1" y1=".6" x2=".8" y2=".2">
        <stop offset="0" stopColor="#666" />
        <stop offset=".35" stopColor="#6a6a6a" />
        <stop offset="1" stopColor="#b8b8b8" />
      </linearGradient>
      <linearGradient id="lip">
        <stop offset="0" stopColor="#808080" />
        <stop offset="1" stopColor="#b4b4b4" />
      </linearGradient>
      <linearGradient id="corner">
        <stop offset="0" stopColor="#a8a8a8" />
        <stop offset=".15" stopColor="#b5b5b5" />
        <stop offset="1" stopColor="#696969" />
      </linearGradient>
    </defs>
    <g transform="translate(840 90) scale(.33333)" stroke="#111" strokeWidth="3.500" strokeLinejoin="round" fill="none">
      <path
        fill="#656565"
        d="M1608 118 1735 155Q1840 182 1940 198L1950 204Q1984 228 1983 270L1994 345V362L1986 388 1890 548 1866 660 1653 1016C1620 1070 1550 1090 1480 1073L1463 1070C1420 1060 1370 1075 1345 1110L1330 1140 1025 1650 892 1872 938 1888Q965 1930 973 1975L977 2015 989 2110Q989 2130 977 2150L568 2835C545 2870 500 2895 450 2888L125 2810Q90 2795 82 2760L70 2642Q63 2610 75 2585L430 1988 448 2025 530 1890 523 1810 960 1078 1500 170C1525 130 1570 125 1600 124Z"
      />
      {/* rear pad */}
      <g transform="translate(960 0)">
        <path d="M640 124 427 481M650 120 434 482" strokeWidth="4" />
        <path d="M985 203 729 638M990 208 735 632" strokeWidth="5" />
        <path fill="#6f6f6f" d="M1023 270 1034 350V362L1023 388 1014 292Z" />
        <path d="M1024 252Q1022 275 1014 292L676 858" />
        <ellipse cx="768" cy="250" rx="55" ry="38" fill="url(#bore)" />
        <path d="M724 275Q765 232 816 266" />
        <path fill="url(#bore)" d="M555 513C570 485 650 478 656 515L652 537Z" />
        <path d="M365 472 283 610" />
        <path fill="#656565" d="M371 469 718 553 632 700 286 616Z" />
        <path fill="#a3a3a3" d="M286 616 632 700 640 791 293 708Z" />
        <path fill="#656565" d="M718 553 729 638 640 791 632 700Z" />
        <path fill="url(#cyl)" d="M505 917C580 930 640 910 676 858L693 1016C660 1070 590 1090 520 1073Z" />
        <path fill="#9c9c9c" d="M412 894 505 917 520 1073 503 1070 496 1012Z" />
        <path fill="url(#cove)" d="M283 931C310 895 360 882 412 894L496 1012C440 1015 400 1040 383 1070Z" />
        <path fill="url(#lip)" d="M383 1070C400 1040 440 1015 496 1012L503 1070C460 1060 410 1070 387 1108Z" />
      </g>
      {/* ejection port relief */}
      <path d="M1243 931 743 1772C725 1810 745 1835 797 1850L743 1772M1343 1070 868 1868" />
      {/* front lug */}
      <g transform="translate(0 1650)">
        <path fill="#a0a0a0" d="M523 162 555 225 552 167 575 183 592 355 530 240Z" />
        <path fill="#777" d="M552 167 600 154 938 238 780 235 575 183Z" />
        <path fill="#5f5f5f" d="M575 183 780 235 766 264C700 272 610 262 575 183Z" />
        <path fill="#626262" d="M780 235 938 238Q965 280 973 325L818 287Q785 278 766 264Z" />
        <path fill="url(#lug)" d="M575 183C610 262 700 272 766 264Q785 278 818 287L831 414C740 450 620 430 592 355Z" />
        <path fill="#8b8b8b" d="M818 287 973 325 977 363 831 414Z" />
        <path d="M448 375C510 500 620 540 700 535 780 535 850 500 907 452L914 505 970 417Q980 395 977 363" />
        <path fill="#707070" d="M979 378 989 460 977 500 970 417Z" />
        <path d="M907 452 553 1048 568 1185" />
        <path fill="#929292" d="M70 992Q85 1030 115 1050L125 1160Q90 1145 82 1110Z" />
        <path fill="#a3a3a3" d="M115 1050C220 1105 350 1135 440 1130L450 1238 125 1160Z" />
        <path fill="url(#corner)" d="M440 1130C490 1115 530 1085 553 1048L568 1185C545 1220 500 1245 450 1238Z" />
        <ellipse cx="562" cy="635" rx="54" ry="38" fill="url(#bore)" />
        <path d="M517 656Q560 612 612 643" />
        <path d="M545 671Q562 662 580 670Z" fill="#a996cf" strokeWidth="2" />
        <ellipse cx="325" cy="1035" rx="54" ry="38" fill="url(#bore)" />
        <path d="M280 1056Q323 1012 375 1043" />
        <path d="M307 1070Q324 1062 344 1069Z" fill="#a996cf" strokeWidth="2" />
      </g>
    </g>
    {/* axis triad */}
    <path d="M665 1168 688 1174" stroke="#1c1ca8" strokeWidth="4" />
    <path d="M684 1168 694 1175 682 1179Z" fill="#2525d0" />
    <path d="M665 1168V1184" stroke="#0c4f14" strokeWidth="3" />
    <path d="M661 1181h9v6l-4 5-5-5Z" fill="#14661c" />
    <path d="M665 1168 656 1184" stroke="#a01414" strokeWidth="4" />
    <path d="M652 1179l8 3-7 8Z" fill="#d82020" />
    <g fontSize="11">
      <text x="648" y="1196" fill="#e03030">X</text>
      <text x="663" y="1198" fill="#22803a">Y</text>
      <text x="692" y="1180" fill="#2828e0">Z</text>
    </g>
  </svg>
);

const viewIcons = [
  { name: 'zoomFit' },
  { name: 'zoomArea' },
  { name: 'prevView' },
  { name: 'section' },
  { name: 'viewCube', menu: true },
  { name: 'shaded', menu: true },
  { name: 'eye', menu: true },
  { name: 'paint' },
  { name: 'scene', menu: true },
  { name: 'monitor', menu: true },
];

const Viewport = () => (
  <main className="relative -mt-[23px] min-w-0 flex-1 border-t border-r-2 border-l border-[#8a8a8a] bg-[#c6ade8]">
    <Model />
    <div className="absolute inset-x-0 top-1 flex justify-center pr-2">
      <div className="flex items-center">
        {viewIcons.map((icon) => (
          <div key={icon.name} className="flex items-center">
            <button className="flex w-6 justify-center" aria-label={icon.name}>
              <Glyph name={icon.name} />
            </button>
            {icon.menu && (
              <button className="flex w-3 justify-center" aria-label={`${icon.name} options`}>
                <Caret className="text-[#8b7ea3]" />
              </button>
            )}
          </div>
        ))}
      </div>
    </div>
    <div className="absolute top-1 right-1 flex">
      {['paneL', 'paneR', 'min', 'restore', 'close'].map((name) => (
        <button key={name} className="flex w-6 justify-center" aria-label={name}>
          <Glyph name={name} />
        </button>
      ))}
    </div>
    <div className="absolute top-[71px] right-0 grid h-[175px] w-6 auto-rows-fr border border-[#888] bg-[#333]">
      {['home', 'library', 'folderOpen', 'palette', 'ball', 'list', 'cam', 'mcam'].map((name, i) => (
        <button
          key={name}
          aria-label={`${name} pane`}
          className={`flex items-center justify-center border-b border-[#888] last:border-b-0 ${i === 0 ? 'bg-[#b5b5b5]' : ''}`}
        >
          <Glyph name={name} />
        </button>
      ))}
    </div>
    <button
      aria-label="Collapse panel"
      className="absolute top-[540px] -left-px flex h-[41px] w-2 items-center border-y border-r border-[#888] bg-[#4a4a4a]"
    >
      <span className="size-1.5 rounded-full bg-gray-300" />
    </button>
  </main>
);

const StudyTabs = () => (
  <div className="flex h-[18px] shrink-0 border-t border-b border-[#777] pl-[76px]">
    <div className="w-[25px] bg-[#b4b4b4]" />
    <div className="flex w-[59px] border-b border-white bg-[#999]">
      {['M4 2v8M10 2 5 6l5 4Z', 'M9 2 4 6l5 4Z', 'M4 2l5 4-5 4Z', 'M9 2v8M3 2l5 4-5 4Z'].map((d) => (
        <button key={d} aria-label="Scroll tabs" className="flex flex-1 items-center justify-center border border-[#8b8b8b] bg-[#a5a5a5]">
          <svg viewBox="0 0 12 12" className="size-2.5" aria-hidden="true">
            <path d={d} fill="#888" stroke="#888" />
          </svg>
        </button>
      ))}
    </div>
    <button className="flex w-[59px] items-center justify-center font-bold text-white">Model</button>
    <button className="flex w-[113px] items-center border-x border-[#777] bg-[#333] pl-[9px]">Motion Study 1</button>
  </div>
);

// taskbar artwork, 24 units square
const apps: React.ReactNode[] = [
  <path d="M3 2v4h10V2M3 20v-7h10v7M18 2v3M18 8v12" fill="none" stroke="#eee" strokeWidth="1.500" />,
  <><path d="M1 2h8l2 3H1Z" fill="#e8a718" /><path d="M1 4h22v16H1Z" fill="#ffd766" /></>,
  <><circle cx="12" cy="12" r="12" fill="#dd3b2f" /><path d="M12 12 1.500 6a12 12 0 0 0 9 18Z" fill="#2ba24c" /><path d="M12 12h12a12 12 0 0 1-12 12Z" fill="#fbc116" /><circle cx="12" cy="12" r="6" fill="#fff" /><circle cx="12" cy="12" r="4.500" fill="#3b7de8" /></>,
  <><path d="M3 3h21l-4 19H0Z" fill="#a9cbe4" /><path d="M5 5h17l-1 3H4ZM4 10h16l-1 3H3Z" fill="#e9f3fb" /></>,
  <><path d="M6 1h18v22H6Z" fill="#21a366" /><path d="M15 1h9v7h-9Z" fill="#33c481" /><path d="M0 6h12v12H0Z" fill="#107c41" /><path d="M3 8l6 8M9 8l-6 8" stroke="#fff" strokeWidth="2" /></>,
  <><path d="M1 1h22v22H1Z" fill="#001e26" stroke="#23b4e8" strokeWidth="1.500" /><text x="5" y="16" fontSize="12" fill="#23b4e8">Ps</text></>,
  <><ellipse cx="11" cy="14" rx="11" ry="10" fill="#e6edf2" /><circle cx="7" cy="9" r="2" fill="#68b32d" /><circle cx="12" cy="7" r="2" fill="#e9b400" /><path d="M14 12 20 1l3 2-7 10Z" fill="#b48a5a" /></>,
  <><path d="M6 1h18v22H6Z" fill="#0a64ad" /><path d="M14 1h10v8H14Z" fill="#28a8ea" /><path d="M0 6h12v12H0Z" fill="#0f6cbd" /><circle cx="6" cy="12" r="3" fill="none" stroke="#fff" strokeWidth="2" /></>,
  <><path d="M6 1h18v22H6Z" fill="#2b7cd3" /><path d="M6 1h18v7H6Z" fill="#41a5ee" /><path d="M0 6h12v12H0Z" fill="#185abd" /><path d="M2 9l2 6 2-5 2 5 2-6" fill="none" stroke="#fff" strokeWidth="1.500" /></>,
  <><path d="M0 0h24v24H0Z" fill="#c20d0d" /><path d="M7 20V5h12M7 11h9" fill="none" stroke="#fff" strokeWidth="4" /></>,
  <><path d="M2 6l16-5 4 3-1 8-17 4Z" fill="#222" stroke="#666" /><path d="M4 10l8-1 10 1v6L5 16Z" fill="#9c1f1f" /></>,
  <><circle cx="12" cy="12" r="8.500" fill="none" stroke="#fff" strokeWidth="4" strokeDasharray="3.400 3.300" /><circle cx="12" cy="12" r="6" fill="none" stroke="#fff" strokeWidth="3" /></>,
  <><path d="M3 0h18v24H3Z" fill="#7b8790" /><path d="M5 2h14v5H5Z" fill="#4fd2f0" /><path d="M5 10h3v3H5ZM10 10h3v3h-3ZM15 10h3v3h-3Z" fill="#eee" /></>,
  <><path d="M2 3l16-2 4 2v20H2Z" fill="#d3171e" /><path d="M6 9v8M10 9v8M14 7v10M18 5v12" stroke="#222" strokeWidth="1.500" /></>,
  <><path d="M0 0h24v24H0Z" fill="#db2128" /><path d="M12 4v18M7 8l10 10M17 5 7 17M5 13h14" stroke="#fff" strokeWidth="2.500" /></>,
  <><circle cx="12" cy="12" r="12" fill="#1fd760" /><path d="M5 9c5-2 10-1 14 1M6 13c4-1 8-1 11 1" fill="none" stroke="#111" strokeWidth="2.500" /></>,
  <><circle cx="12" cy="12" r="11" fill="#fff" stroke="#f7a1b5" strokeWidth="2" /><path d="M9 16V6l7-1v10" fill="none" stroke="#ec4c76" strokeWidth="2" /></>,
  <><circle cx="12" cy="12" r="11" fill="#fff" stroke="#1f88d9" strokeWidth="2" /><path d="M6 12h6V5l6 4v7h-6" fill="none" stroke="#66a92f" strokeWidth="3" /></>,
  <><circle cx="12" cy="12" r="10" fill="none" stroke="#aaa" strokeWidth="2" /><path d="M12 2v20M2 12h20M4 7h16M12 2c-6 5-6 15 0 20M12 2c6 5 6 15 0 20" fill="none" stroke="#aaa" /></>,
  <path d="M3 1c6 1 12 9 14 20C8 19 1 10 3 1Z" fill="#111" stroke="#bbb" strokeWidth="1.500" />,
  <><circle cx="12" cy="12" r="12" fill="#1a8fd6" /><path d="M1 9C3-2 21-3 24 10c0 6-6 6-10 5 3-4-2-10-13-6Z" fill="#35c9a8" /></>,
];

const Taskbar = () => (
  <footer className="h-[19px] shrink-0 overflow-hidden bg-[#282820]">
    <div className="flex h-[42px] items-stretch bg-linear-to-r from-[#23201c] via-[#2d2e22] to-[#1f241b]">
      <button className="flex w-[49px] shrink-0 items-center justify-center" aria-label="Start">
        <svg viewBox="0 0 16 16" className="size-4" aria-hidden="true">
          <path d="M0 2l7-1v6.500H0ZM8 1l8-1v7.500H8ZM0 8.500h7V15l-7-1ZM8 8.500h8V16l-8-1Z" fill="#fff" />
        </svg>
      </button>
      <label className="flex w-[300px] shrink-0 items-center bg-[#f2f2f2] pl-[18px] text-[15px]">
        <svg viewBox="0 0 16 16" className="size-4 shrink-0" aria-hidden="true">
          <path d="M5 11l-4 4" stroke="#222" strokeWidth="1.500" />
          <circle cx="9" cy="6" r="5.500" fill="none" stroke="#222" strokeWidth="1.500" />
        </svg>
        <input
          aria-label="Taskbar search"
          placeholder="Type here to search"
          className="ml-2.5 w-44 shrink-0 bg-transparent placeholder:text-[#444]"
        />
        <span className="mt-[5px] flex h-[35px] w-[75px] justify-center self-start rounded-lg bg-[#e0e0e0]">
          <svg viewBox="0 0 32 30" className="h-[30px] w-8" aria-hidden="true">
            <path d="M12 8V6q0-2 2-2h4q2 0 2 2v2" fill="none" stroke="#333" strokeWidth="2.500" />
            <path d="M0 8h32v20H0Z" fill="#f29400" />
          </svg>
        </span>
      </label>
      {apps.map((art, i) => (
        <button
          key={i}
          aria-label={`App ${i + 1}`}
          className={`flex w-[50px] shrink-0 items-center justify-center ${i === 20 ? 'bg-[#ab6526]' : i === 13 ? 'bg-[#55564e]' : ''}`}
        >
          <svg viewBox="0 0 24 24" className="size-6" aria-hidden="true">
            {art}
          </svg>
        </button>
      ))}
      <div className="flex flex-1 items-center justify-end text-[15px] text-white">
        <svg viewBox="0 0 24 24" className="mr-2 size-6" aria-hidden="true">
          <circle cx="9" cy="14" r="8" fill="#dbe6ee" />
          <circle cx="15" cy="8" r="7.500" fill="#d4372c" />
          <text x="12" y="12" fontSize="11" fill="#fff">1</text>
        </svg>
        <span className="w-[98px]">79°F&nbsp; Windy</span>
        <svg viewBox="0 0 120 24" className="h-6 w-[120px]" aria-hidden="true">
          <path d="M6 22 9 4h4l4 9 2-9h4l-3 18Z" fill="#cf3558" />
          <path d="M32 2h14v18H32Z" fill="#111" />
          <path d="M35 14l8-7v8Z" fill="#68ad35" />
          <circle cx="61" cy="11" r="7" fill="none" stroke="#eee" strokeWidth="2" />
          <path d="M78 4l8-3 5 10 3 2v9H78Z" fill="#c42b23" />
          <circle cx="110" cy="12" r="9" fill="#2ba0a5" />
          <circle cx="110" cy="12" r="4" fill="none" stroke="#fff" strokeWidth="2" />
        </svg>
      </div>
    </div>
  </footer>
);

const App = () => {
  return (
    <div className="flex h-screen min-h-[1000px] flex-col overflow-hidden bg-[#4a4a4a] font-['Open_Sans','Noto_Sans',sans-serif] text-xs text-gray-200">
      <MenuBar />
      <Ribbon />
      <CommandTabs />
      <div className="flex min-h-0 flex-1">
        <aside className="flex w-[622px] shrink-0">
          <ToolColumns />
          <FeatureManager />
        </aside>
        <Viewport />
      </div>
      <StudyTabs />
      <div className="flex h-[18px] shrink-0 items-center justify-between overflow-hidden whitespace-nowrap">
        <span className="pt-px">SOLIDWORKS 2022 SP5.0</span>
        <span className="w-3">Editing Part</span>
      </div>
      <Taskbar />
    </div>
  );
};

export default App;
